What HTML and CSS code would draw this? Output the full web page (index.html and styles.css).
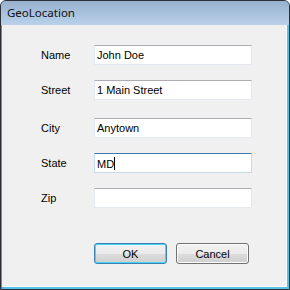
FILE: index.html
```html
<!DOCTYPE html>
<html lang="en">
<head>
  <meta charset="UTF-8" />
  <meta name="viewport" content="width=device-width, initial-scale=1.0" />
  <title>GeoLocation</title>
  <link rel="stylesheet" href="styles.css">
</head>
<body>
  <div class="window">
    <div class="titlebar">GeoLocation</div>
    <div class="frame">
      <div class="client">
        <div class="row">
          <label class="label">Name</label>
          <div class="field">John Doe</div>
        </div>
        <div class="row">
          <label class="label">Street</label>
          <div class="field">1 Main Street</div>
        </div>
        <div class="row row-wide">
          <label class="label">City</label>
          <div class="field">Anytown</div>
        </div>
        <div class="row">
          <label class="label">State</label>
          <div class="field focused">MD<span class="caret"></span></div>
        </div>
        <div class="row">
          <label class="label">Zip</label>
          <div class="field"></div>
        </div>
        <div class="buttons">
          <button class="btn default">OK</button>
          <button class="btn">Cancel</button>
        </div>
      </div>
    </div>
  </div>
</body>
</html>
```

FILE: styles.css
```css
*{box-sizing:border-box}
body{margin:0;background:#fff;font-family:"Liberation Sans",Arial,sans-serif}
.window{width:290px;height:290px;border:1px solid #2c2f33;border-radius:6px 6px 0 0;display:flex;flex-direction:column;overflow:hidden;background:#57c3e4}
.titlebar{height:24px;flex:none;padding:5px 0 0 6px;font-family:"Noto Sans","Open Sans",sans-serif;font-size:11.5px;color:#111;background:linear-gradient(#97b1cf,#b9d1ea);line-height:14px}
.frame{flex:1;display:flex;padding:0 2px 2px 1px;background:linear-gradient(90deg,#3f8fcf 0,#57c3e4 3px)}
.client{flex:1;display:flex;flex-direction:column;background:#f0f0f0;border-right:1px solid #fafafa;border-bottom:1px solid #fafafa;padding:20px 0 0 39px;font-size:11px;color:#000}
.row{display:flex;align-items:center;height:20px;margin-bottom:15px}
.row-wide{margin-top:3px}
.label{width:53px}
.field{width:158px;height:20px;background:#fff;border:1px solid #e3e9ef;border-top-color:#abadb3;padding:3px 2px;line-height:12px;white-space:nowrap}
.field.focused{border-color:#c5daed;border-top-color:#3d7bad}
.caret{display:inline-block;width:1px;height:13px;background:#000;vertical-align:-2px}
.buttons{display:flex;gap:9px;margin:20px 0 0 53px}
.btn{width:73px;height:21px;padding:0;font:11px "Liberation Sans",Arial,sans-serif;color:#000;border:1px solid #707070;border-radius:3px;background:linear-gradient(#f2f2f2 0,#ebebeb 50%,#dddddd 51%,#cfcfcf 100%);box-shadow:inset 0 0 0 1px #fcfcfc}
.btn.default{border-color:#3c7fb1;box-shadow:inset 0 0 0 1px #48d5fc}
```
